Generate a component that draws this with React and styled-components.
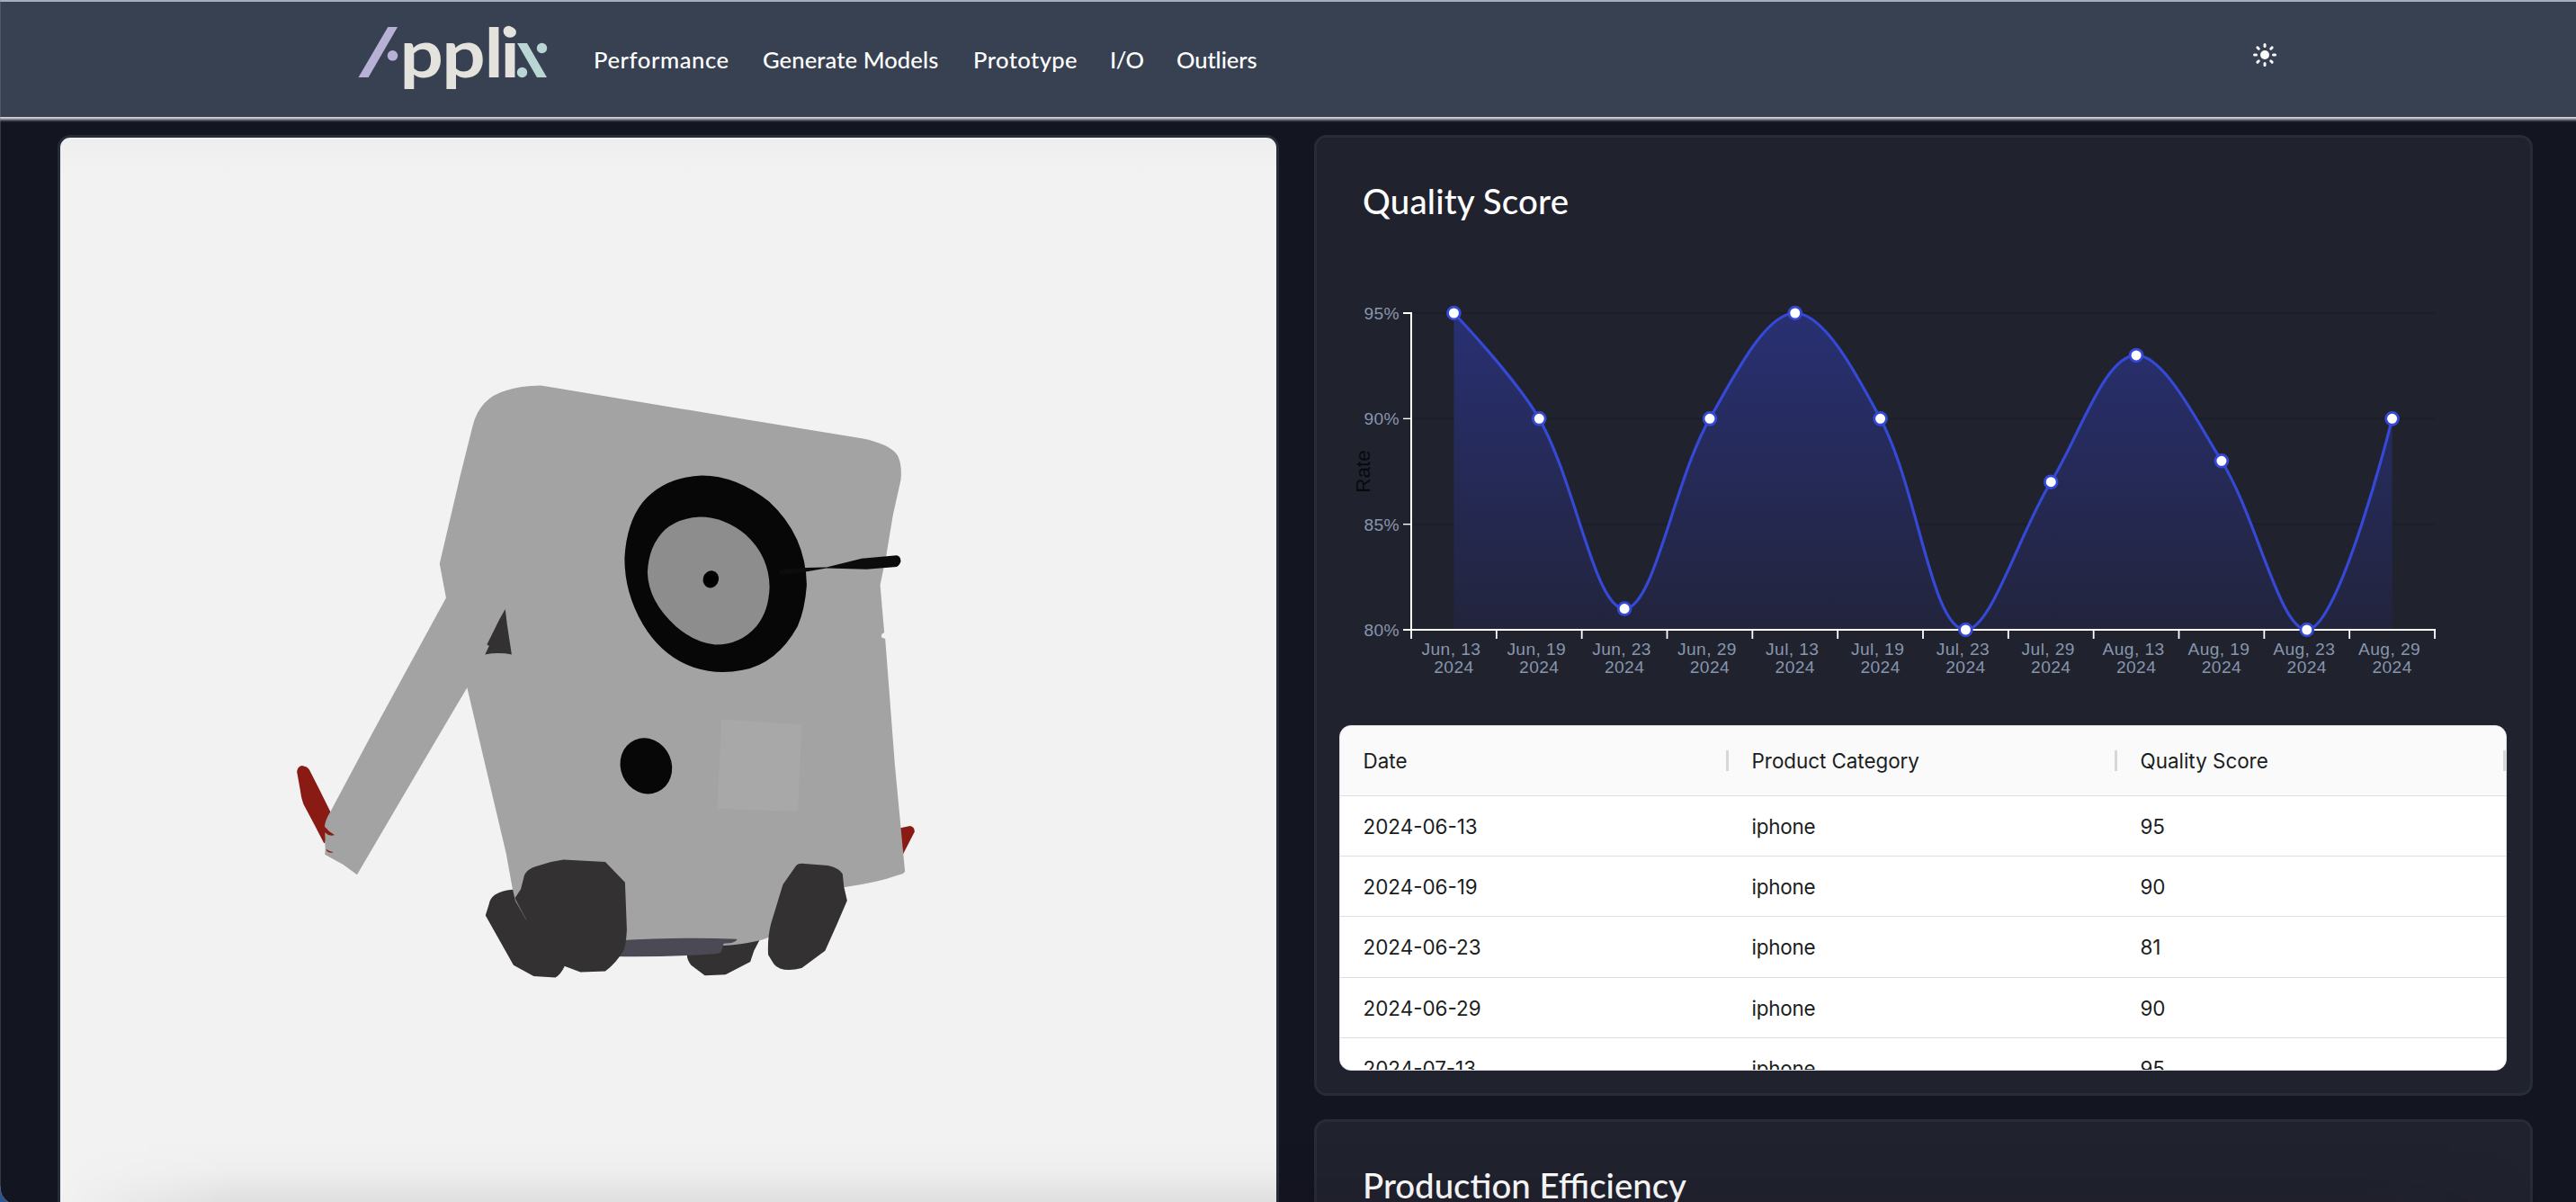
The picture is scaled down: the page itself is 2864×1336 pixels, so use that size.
import React from 'react';
import styled, { createGlobalStyle } from 'styled-components';

const GlobalStyle = createGlobalStyle`
  * { box-sizing: border-box; }
  html, body { margin: 0; padding: 0; background: #131520; }
  body { overflow: hidden; }
`;

const display = `Lato, "Noto Sans", sans-serif`;
const ui = `Inter, "Liberation Sans", sans-serif`;
const chartFont = '"Liberation Sans", Arial, sans-serif';

const Page = styled.div`
  position: relative;
  width: 2864px;
  height: 1336px;
  overflow: hidden;
  background: #131520;
  color: #fff;
  font-family: ${display};
`;

const Header = styled.header`
  display: flex;
  align-items: center;
  height: 130px;
  padding: 0 331px 0 394px;
  border-top: 2px solid #a3afc4;
  background: #374152;
`;

const HeaderEdge = styled.div`
  height: 6px;
  background: linear-gradient(#d3d4d6 0 1px, #b3b5b9 1px 2px, #8c8e93 2px 3px, #5d5f67 3px 4px, #343640 4px 5px, #1d1f2a 5px 6px);
`;

const Logo = styled.svg`
  display: block;
  width: 230px;
  height: 100px;
  margin-right: 36px;
  overflow: visible;
`;

const LogoText = styled.text`
  font-family: ${display};
  font-weight: 700;
  font-size: 75.5px;
  fill: #e4e2dc;
`;

const Nav = styled.nav`
  display: flex;
  flex: 1;
  margin-top: -1px;
  font-size: 25.6px;
  font-weight: 500;
  line-height: 34px;
`;

const NavItem = styled.a`
  width: ${p => p.$width}px;
  letter-spacing: ${p => p.$spacing}px;
  white-space: nowrap;
`;

const ThemeButton = styled.button`
  display: flex;
  padding: 0;
  margin-bottom: 10px;
  border: 0;
  background: none;
`;

const Main = styled.main`
  display: grid;
  grid-template-columns: 1358px 1355px;
  column-gap: 39px;
  padding: 14px 0 0 64px;
`;

const card = `
  border: 3px solid #262d38;
  border-radius: 14px;
`;

const Viewer = styled.section`
  ${card}
  height: 1300px;
  padding: 247px 233px;
  background: #f2f2f2 linear-gradient(#eeeeee, #f2f2f2 40px);
`;

const Robot = styled.svg`
  display: block;
  width: 800px;
  height: 720px;
`;

const Column = styled.div`
  display: flex;
  flex-direction: column;
  gap: 26px;
`;

const Card = styled.section`
  ${card}
  height: ${p => p.$height}px;
  padding: 42px 26px 0 25px;
  background: #20222e;
`;

const Title = styled.h2`
  margin: 0 0 2px 26px;
  font-size: 38.4px;
  font-weight: 500;
  line-height: 56px;
  letter-spacing: ${p => p.$spacing || 0}px;
`;

const Chart = styled.svg`
  display: block;
  width: 1298px;
  height: 553px;
  font-family: ${chartFont};
`;

const AxisText = styled.text`
  font-size: 19.2px;
  letter-spacing: 0.4px;
  fill: #8796ac;
`;

const AxisName = styled.text`
  font-size: 22.4px;
  fill: #08090c;
`;

const Table = styled.div`
  height: 384px;
  overflow: hidden;
  border: 1px solid #dadcdf;
  border-radius: 13px;
  background: #fff;
  color: #1a1d21;
  font-family: ${ui};
  font-size: 22.4px;
`;

const Row = styled.div`
  display: grid;
  grid-template-columns: repeat(3, 432px);
  height: ${p => (p.$head ? 78 : 67.2)}px;
  border-bottom: 1px solid #dddfe1;
  background: ${p => (p.$head ? '#fafafa' : '#fff')};
`;

const Cell = styled.div`
  display: flex;
  align-items: center;
  justify-content: space-between;
  padding: ${p => (p.$head ? '0 0 1px' : '1px 0 0')} 25.6px;
  padding-right: 0;
  letter-spacing: ${p => p.$spacing || 0}px;
`;

const Resizer = styled.span`
  width: 3px;
  height: 23px;
  background: #d5d7d9;
`;

const BottomShade = styled.div`
  position: absolute;
  left: 64px;
  right: 40px;
  bottom: 0;
  height: 66px;
  background: linear-gradient(transparent, rgba(20, 10, 20, 0.02) 50%, rgba(20, 10, 20, 0.08));
  mask-image: linear-gradient(90deg, transparent, #000 200px, #000 calc(100% - 200px), transparent);
`;

const WindowEdge = styled.div`
  position: absolute;
  inset: 0;
  border-left: 1px solid rgba(120, 135, 155, 0.32);
`;

const WindowCorner = styled.svg`
  position: absolute;
  left: 0;
  bottom: 0;
  width: 10px;
  height: 18px;
`;

const NAV = [
  ['Performance', 188, 0.6],
  ['Generate Models', 234, 0.08],
  ['Prototype', 152, 0.4],
  ['I/O', 74, -0.6],
  ['Outliers', 120, -0.1],
];

const POINTS = [
  ['Jun, 13', 95], ['Jun, 19', 90], ['Jun, 23', 81], ['Jun, 29', 90],
  ['Jul, 13', 95], ['Jul, 19', 90], ['Jul, 23', 80], ['Jul, 29', 87],
  ['Aug, 13', 93], ['Aug, 19', 88], ['Aug, 23', 80], ['Aug, 29', 90],
];

const ROWS = [
  ['2024-06-13', 95], ['2024-06-19', 90], ['2024-06-23', 81],
  ['2024-06-29', 90], ['2024-07-13', 95],
];

const LEFT = 80;
const RIGHT = 1218;
const TOP = 95;
const BOTTOM = 447;
const BAND = (RIGHT - LEFT) / 12;
const yOf = v => BOTTOM - ((v - 80) * (BOTTOM - TOP)) / 15;
const xOf = i => LEFT + BAND * (i + 0.5);

function smoothPath(pts, smooth = 0.35) {
  const clamp = (v, a, b) => Math.max(Math.min(a, b), Math.min(Math.max(a, b), v));
  let d = `M${pts[0][0]},${pts[0][1]}`;
  let c0 = pts[0];
  for (let i = 1; i < pts.length; i++) {
    const [px, py] = pts[i - 1];
    const [x, y] = pts[i];
    let c1 = [x, y];
    let next = [x, y];
    if (i < pts.length - 1) {
      const [nx, ny] = pts[i + 1];
      const lenPrev = Math.hypot(x - px, y - py);
      const lenNext = Math.hypot(nx - x, ny - y);
      const ratio = lenNext / (lenNext + lenPrev);
      const vx = nx - px;
      const vy = ny - py;
      next = [clamp(x + vx * smooth * ratio, nx, x), clamp(y + vy * smooth * ratio, ny, y)];
      c1 = [
        clamp(x - ((next[0] - x) * lenPrev) / lenNext, px, x),
        clamp(y - ((next[1] - y) * lenPrev) / lenNext, py, y),
      ];
      next = [x + ((x - c1[0]) * lenNext) / lenPrev, y + ((y - c1[1]) * lenNext) / lenPrev];
    }
    d += ` C${c0[0]},${c0[1]} ${c1[0]},${c1[1]} ${x},${y}`;
    c0 = next;
  }
  return d;
}

function QualityChart() {
  const pts = POINTS.map(([, v], i) => [xOf(i), yOf(v)]);
  const line = smoothPath(pts);
  return (
    <Chart viewBox="0 0 1298 553">
      <defs>
        <linearGradient id="area" x1="0" y1="0" x2="0" y2="1">
          <stop offset="0" stopColor="#283072" />
          <stop offset="1" stopColor="#22243c" />
        </linearGradient>
      </defs>
      {[95, 90, 85].map(v => (
        <line key={v} x1={LEFT} x2={RIGHT} y1={yOf(v)} y2={yOf(v)} stroke="#1b1d28" strokeWidth="1.6" />
      ))}
      <path d={`${line} L${pts[11][0]},${BOTTOM} L${pts[0][0]},${BOTTOM} Z`} fill="url(#area)" />
      <g stroke="#fff" strokeWidth="2">
        <line x1={LEFT} x2={LEFT} y1={TOP - 1} y2={BOTTOM} />
        <line x1={LEFT} x2={RIGHT + 1} y1={BOTTOM} y2={BOTTOM} />
        {[95, 90, 85, 80].map(v => (
          <line key={v} x1={LEFT - 9} x2={LEFT} y1={yOf(v)} y2={yOf(v)} strokeWidth={v === 95 || v === 80 ? 2 : 1.4} />
        ))}
        {Array.from({ length: 13 }, (_, i) => (
          <line key={i} x1={LEFT + BAND * i} x2={LEFT + BAND * i} y1={BOTTOM} y2={BOTTOM + 10} strokeWidth="1.8" />
        ))}
      </g>
      <path d={line} fill="none" stroke="#3549d6" strokeWidth="3.2" />
      {pts.map(([x, y]) => (
        <circle key={x} cx={x} cy={y} r="6.9" fill="#fff" stroke="#3549d6" strokeWidth="2.8" />
      ))}
      {[95, 90, 85, 80].map(v => (
        <AxisText key={v} x="67" y={yOf(v) + 7} textAnchor="end">{v}%</AxisText>
      ))}
      {POINTS.map(([label], i) => (
        <React.Fragment key={label}>
          <AxisText x={xOf(i) - 3} y={BOTTOM + 28} textAnchor="middle">{label}</AxisText>
          <AxisText x={xOf(i)} y={BOTTOM + 48} textAnchor="middle">2024</AxisText>
        </React.Fragment>
      ))}
      <AxisName transform={`translate(34 ${(TOP + BOTTOM) / 2}) rotate(-90)`} textAnchor="middle">Rate</AxisName>
    </Chart>
  );
}

function RobotModel() {
  return (
    <Robot viewBox="0 0 1568 1568" preserveAspectRatio="none">
      <g fill="#8a1b14">
        <path d="M59,997 Q60,984 70,982 Q82,984 86,992 L108,1040 L132,1094 L150,1150 L118,1170 L98,1127 L73,1075 Q68,1060 66,1040 Z" />
        <path d="M1370,1134 L1395,1128 Q1405,1130 1405,1142 L1380,1196 Z" />
      </g>
      <path fill="#333132" d="M900,1400 L1070,1398 L1055,1430 L1047,1457 L993,1488 L948,1490 L918,1465 Q909,1452 909,1440 Z" />
      <path fill="#333132" d="M560,1290 L528,1282 Q505,1284 490,1295 Q480,1303 478,1316 L470,1345 L531,1465 L575,1492 L622,1495 Q634,1488 643,1466 L660,1350 Z" />
      <path fill="#a3a3a3" d="M442,160 Q457,92 515,74 Q545,63 590,62 L618,67 L1020,141 L1290,190 Q1350,203 1367,230 Q1378,250 1375,290 L1358,375 L1343,475 L1330,545 L1339,660 L1333,664 L1333,672 L1341,675 L1362,980 L1384,1238 Q1382,1244 1370,1247 Q1320,1267 1253,1276 L1120,1300 L1088,1397 Q1060,1412 988,1418 L760,1410 L558,1353 L535,1310 L528,1275 L515,1195 L465,960 L430,793 L320,1000 L190,1246 L160,1222 L120,1197 L121,1185 L119,1150 Q116,1120 132,1094 L225,900 L384,576 L370,493 L415,280 Z" />
      <path fill="#4b4953" d="M760,1405 Q900,1396 1018,1402 Q1017,1412 989,1413 L984,1432 Q980,1438 968,1438 Q860,1446 750,1444 Z" />
      <g fill="#8a1b14">
        <path d="M118,1128 Q128,1142 141,1150 Q130,1155 120,1144 L121,1168 Q116,1150 118,1128 Z" />
        <path d="M122,1184 Q130,1190 139,1192 Q126,1195 122,1184 Z" />
      </g>
      <path fill="#333132" d="M513,603 L517,640 L527,713 Q498,707 469,713 L478,692 L473,689 L500,629 Z" />
      <g fill="#333132">
        <path d="M534,1303 L547,1281 L555,1246 Q562,1232 580,1226 Q610,1214 640,1210 L731,1215 L774,1265 L778,1380 Q776,1420 770,1431 Q755,1460 731,1480 L677,1482 L643,1468 L600,1440 L556,1352 Z" />
        <path d="M1147,1224 Q1151,1219 1159,1219 L1216,1224 Q1240,1230 1248,1244 L1251,1275 L1258,1309 L1235,1368 L1210,1430 L1159,1472 Q1130,1480 1112,1473 Q1103,1470 1098,1462 L1086,1440 Q1084,1400 1092,1365 L1118,1270 Z" />
      </g>
      <path d="M534,1303 L558,1354" stroke="#6a696a" strokeWidth="1.5" fill="none" />
      <path fill="#070707" d="M942,280 Q1015,280 1088,343 Q1168,425 1170,545 Q1166,605 1150,645 Q1105,735 1030,751 Q975,763 925,745 Q855,718 813,640 Q773,565 773,480 Q777,395 812,345 Q860,283 942,280 Z" />
      <path fill="#8d8d8d" d="M937,380 Q990,380 1037,423 Q1088,475 1089,550 Q1087,610 1060,645 Q1025,690 970,689 Q925,684 885,645 Q825,585 823,515 Q825,450 861,411 Q890,383 937,380 Z" />
      <ellipse cx="961" cy="531" rx="17" ry="21" transform="rotate(12 961 531)" fill="#000" />
      <path fill="#0c0c0d" d="M1112,507 L1170,503 L1213,502 L1290,481 L1366,473 Q1375,475 1375,488 Q1372,498 1366,501 L1300,507 L1213,504 L1168,513 L1116,521 Q1104,514 1112,507 Z" />
      <ellipse cx="820" cy="983" rx="56" ry="68" transform="rotate(-12 820 983)" fill="#070707" />
      <path fill="#a8a8a8" d="M984,870 L1159,883 L1151,1093 L975,1086 Z" />
    </Robot>
  );
}

function SunIcon() {
  return (
    <svg width="30" height="30" viewBox="-15 -15 30 30">
      <circle r="5" fill="#fafafa" />
      {Array.from({ length: 8 }, (_, i) => (
        <line key={i} y1="-9.5" y2="-11.5" stroke="#fafafa" strokeWidth="3" strokeLinecap="round" transform={`rotate(${i * 45})`} />
      ))}
    </svg>
  );
}

const LOGO_STRETCH = 1.13;
const LOGO_X = [444.4, 491.2, 538.4, 556.2].map(x => x / LOGO_STRETCH).join(' ');

export default function App() {
  return (
    <>
      <GlobalStyle />
      <Page>
        <Header>
          <Logo viewBox="394 16 230 100" role="img" aria-label="Applix">
            <path d="M431.3,30 H442 L409.6,86 H398.5 Z" fill="#b8b1d6" />
            <circle cx="436.5" cy="61.8" r="5.8" fill="#b8b1d6" />
            <LogoText x={LOGO_X} y="86" transform={`scale(${LOGO_STRETCH} 1)`}>ppli</LogoText>
            <circle cx="565.4" cy="34.5" r="5.8" fill="#e4e2dc" />
            <path d="M575,48 H586 L608,86 H597 Z" fill="#b9d6d5" />
            <circle cx="602.5" cy="53.5" r="5.7" fill="#b9d6d5" />
            <circle cx="580.5" cy="80.5" r="5.7" fill="#b9d6d5" />
          </Logo>
          <Nav>
            {NAV.map(([label, width, spacing]) => (
              <NavItem key={label} $width={width} $spacing={spacing}>{label}</NavItem>
            ))}
          </Nav>
          <ThemeButton aria-label="Toggle theme"><SunIcon /></ThemeButton>
        </Header>
        <HeaderEdge />
        <Main>
          <Viewer><RobotModel /></Viewer>
          <Column>
            <Card $height={1068}>
              <Title $spacing={0.2}>Quality Score</Title>
              <QualityChart />
              <Table>
                <Row $head>
                  <Cell $head>Date<Resizer /></Cell>
                  <Cell $head $spacing={-0.03}>Product Category<Resizer /></Cell>
                  <Cell $head>Quality Score<Resizer /></Cell>
                </Row>
                {ROWS.map(([date, score]) => (
                  <Row key={date}>
                    <Cell>{date}</Cell>
                    <Cell $spacing={-0.2}>iphone</Cell>
                    <Cell $spacing={-0.2}>{score}</Cell>
                  </Row>
                ))}
              </Table>
            </Card>
            <Card $height={300}>
              <Title>Production Efficiency</Title>
            </Card>
          </Column>
        </Main>
        <BottomShade />
        <WindowEdge />
        <WindowCorner viewBox="0 0 10 18">
          <path d="M0,0 Q0,12 9,18 H0 Z" fill="#285591" />
          <path d="M0,0 Q0,12 9,18" fill="none" stroke="#5b6370" strokeWidth="1" />
        </WindowCorner>
      </Page>
    </>
  );
}
